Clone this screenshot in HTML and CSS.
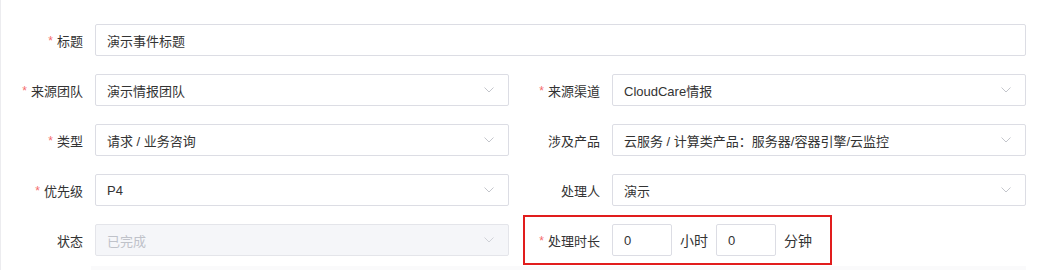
FILE: index.html
```html
<!DOCTYPE html>
<html lang="zh-CN">
<head>
<meta charset="utf-8">
<title>事件表单</title>
<link rel="stylesheet" href="styles.css">
</head>
<body>
<div class="page">
  <form class="form">
    <div class="item span2">
      <label class="label"><span class="req">*</span>标题</label>
      <div class="control"><span class="value">演示事件标题</span></div>
    </div>

    <div class="item">
      <label class="label"><span class="req">*</span>来源团队</label>
      <div class="control select"><span class="value">演示情报团队</span>
        <svg class="arrow" width="10" height="6" viewBox="0 0 10 6"><polyline points="0.5,0.5 5,5 9.5,0.5" fill="none" stroke="#c4c6cc" stroke-width="1"/></svg>
      </div>
    </div>
    <div class="item">
      <label class="label"><span class="req">*</span>来源渠道</label>
      <div class="control select"><span class="value">CloudCare情报</span>
        <svg class="arrow" width="10" height="6" viewBox="0 0 10 6"><polyline points="0.5,0.5 5,5 9.5,0.5" fill="none" stroke="#c4c6cc" stroke-width="1"/></svg>
      </div>
    </div>

    <div class="item">
      <label class="label"><span class="req">*</span>类型</label>
      <div class="control select"><span class="value">请求 / 业务咨询</span>
        <svg class="arrow" width="10" height="6" viewBox="0 0 10 6"><polyline points="0.5,0.5 5,5 9.5,0.5" fill="none" stroke="#c4c6cc" stroke-width="1"/></svg>
      </div>
    </div>
    <div class="item">
      <label class="label">涉及产品</label>
      <div class="control select"><span class="value">云服务 / 计算类产品：服务器/容器引擎/云监控</span>
        <svg class="arrow" width="10" height="6" viewBox="0 0 10 6"><polyline points="0.5,0.5 5,5 9.5,0.5" fill="none" stroke="#c4c6cc" stroke-width="1"/></svg>
      </div>
    </div>

    <div class="item">
      <label class="label"><span class="req">*</span>优先级</label>
      <div class="control select"><span class="value">P4</span>
        <svg class="arrow" width="10" height="6" viewBox="0 0 10 6"><polyline points="0.5,0.5 5,5 9.5,0.5" fill="none" stroke="#c4c6cc" stroke-width="1"/></svg>
      </div>
    </div>
    <div class="item">
      <label class="label">处理人</label>
      <div class="control select"><span class="value">演示</span>
        <svg class="arrow" width="10" height="6" viewBox="0 0 10 6"><polyline points="0.5,0.5 5,5 9.5,0.5" fill="none" stroke="#c4c6cc" stroke-width="1"/></svg>
      </div>
    </div>

    <div class="item">
      <label class="label">状态</label>
      <div class="control select disabled"><span class="value">已完成</span>
        <svg class="arrow" width="10" height="6" viewBox="0 0 10 6"><polyline points="0.5,0.5 5,5 9.5,0.5" fill="none" stroke="#d0d2d8" stroke-width="1"/></svg>
      </div>
    </div>
    <div class="item duration">
      <label class="label"><span class="req">*</span>处理时长</label>
      <div class="control small"><span class="value">0</span></div>
      <span class="unit">小时</span>
      <div class="control small"><span class="value">0</span></div>
      <span class="unit">分钟</span>
      <div class="highlight"></div>
    </div>
  </form>
  <div class="next-row"><div class="next-box"></div></div>
</div>
</body>
</html>
```

FILE: styles.css
```css
* { box-sizing: border-box; }
html, body {
  margin: 0;
  padding: 0;
  background: #fff;
}
body {
  font-family: "Liberation Sans", "Noto Sans CJK SC", sans-serif;
  font-size: 13px;
  color: #333;
}
.page {
  width: 1049px;
  height: 270px;
  overflow: hidden;
  box-shadow: inset 1px 0 0 #ececef;
  padding-top: 24px;
}
.form {
  display: grid;
  grid-template-columns: 509px 509px;
  column-gap: 8px;
  row-gap: 18px;
}
.item {
  display: flex;
  align-items: center;
  height: 32px;
  position: relative;
}
.span2 { grid-column: 1 / span 2; }
.label {
  flex: 0 0 95px;
  text-align: right;
  padding-right: 12px;
  color: #333;
  white-space: nowrap;
}
.req {
  color: #f56c6c;
  margin-right: 4px;
  font-size: 12px;
  position: relative;
  top: -1px;
}
.control {
  flex: 1;
  height: 32px;
  border: 1px solid #dcdde4;
  border-radius: 2px;
  display: flex;
  align-items: center;
  padding: 0 11px;
  background: #fff;
}
.value {
  flex: 1;
  white-space: nowrap;
  overflow: hidden;
}
.arrow {
  flex: 0 0 auto;
  margin-right: 3px;
}
.disabled {
  background: #f5f6f9;
  border-color: #e4e5ea;
}
.disabled .value { color: #bfc2c9; }
.small {
  flex: 0 0 60px;
}
.unit {
  font-size: 14px;
  color: #333;
  margin: 0 8px;
}
.unit:last-of-type { margin-right: 0; }
.highlight {
  position: absolute;
  left: 6px;
  top: -9px;
  width: 309px;
  height: 50px;
  border: 2px solid #e11d1d;
  pointer-events: none;
}
.next-row {
  display: flex;
  margin-top: 10px;
  padding-left: 91px;
  width: 1026px;
}
.next-box {
  flex: 1;
  height: 20px;
  background: #fafafb;
}
```
